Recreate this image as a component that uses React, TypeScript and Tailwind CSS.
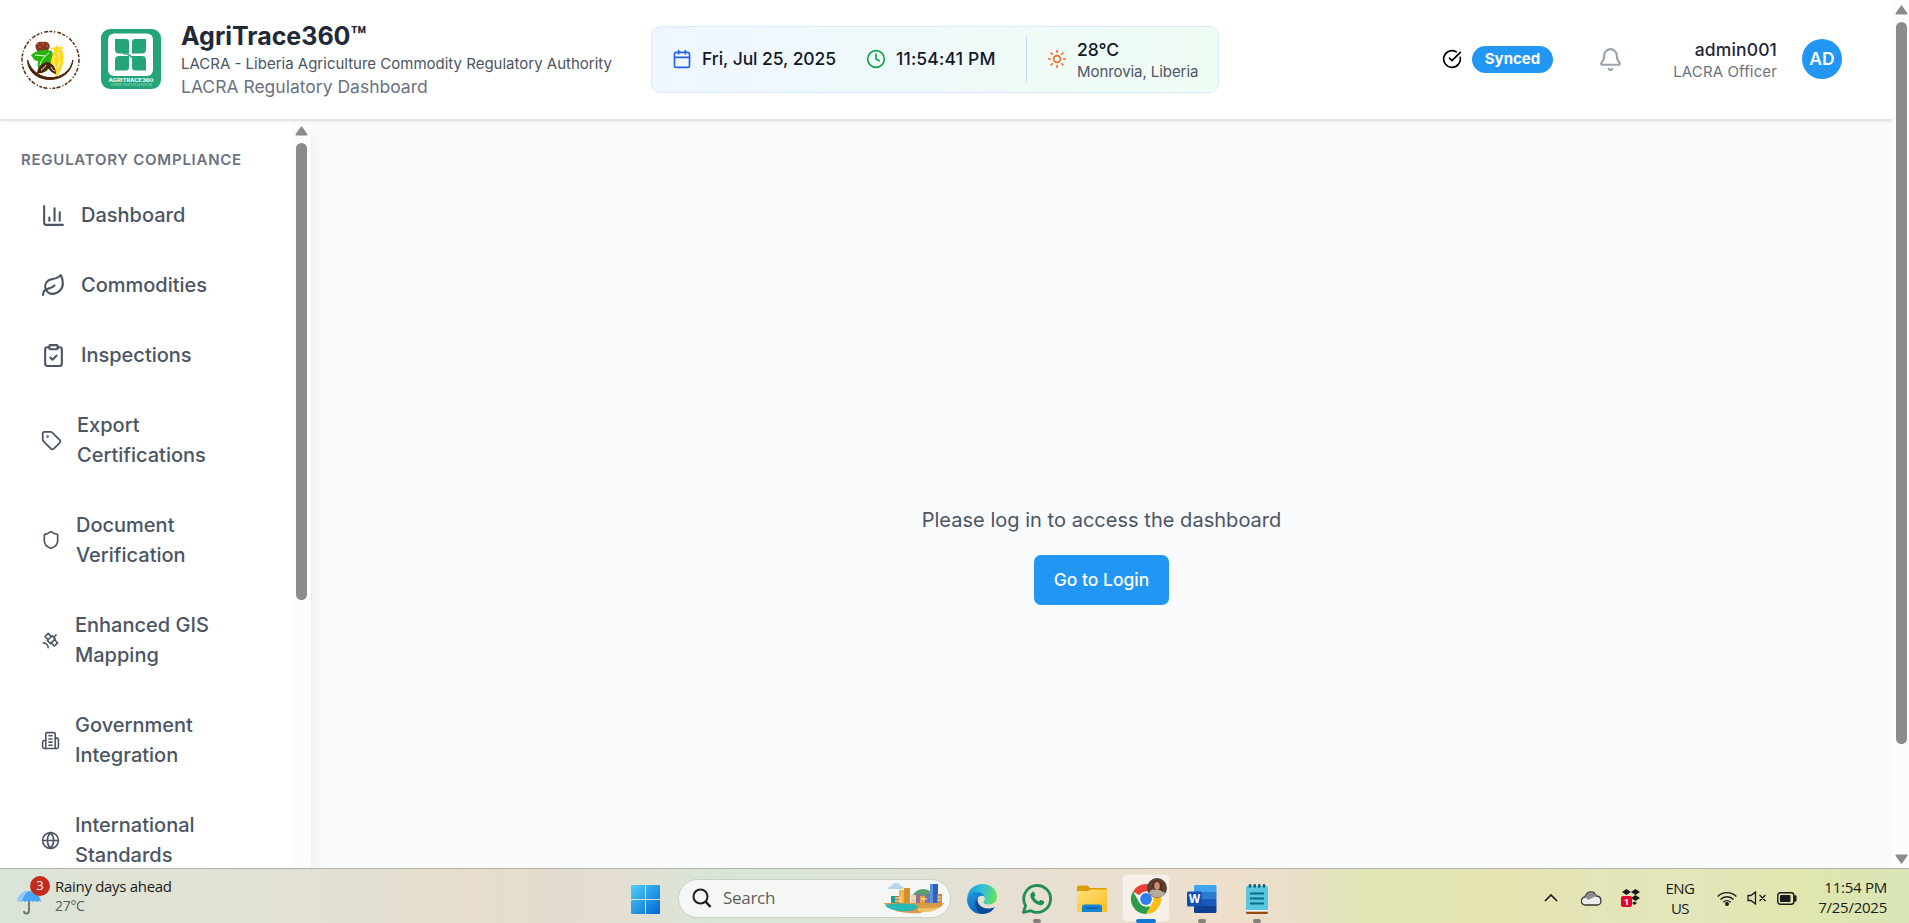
import type { ReactNode } from "react";
import {
  Bell,
  Calendar,
  ChartColumn,
  CircleCheckBig,
  ClipboardCheck,
  Clock,
  Globe,
  Leaf,
  Shield,
  Sun,
  Tag,
} from "lucide-react";

function Satellite({ className }: { className?: string }) {
  return (
    <svg viewBox="0 0 24 24" fill="none" stroke="currentColor" strokeWidth="2" strokeLinecap="round" strokeLinejoin="round" className={className}>
      <path d="M13 7 9 3 5 7l4 4" />
      <path d="m17 11 4 4-4 4-4-4" />
      <path d="m8 12 4 4 6-6-4-4Z" />
      <path d="m16 8 3-3" />
      <path d="M9 21a6 6 0 0 0-6-6" />
    </svg>
  );
}

function Building({ className }: { className?: string }) {
  return (
    <svg viewBox="0 0 24 24" fill="none" stroke="currentColor" strokeWidth="2" strokeLinecap="round" strokeLinejoin="round" className={className}>
      <path d="M6 22V4a2 2 0 0 1 2-2h8a2 2 0 0 1 2 2v18Z" />
      <path d="M6 12H4a2 2 0 0 0-2 2v6a2 2 0 0 0 2 2h2" />
      <path d="M18 9h2a2 2 0 0 1 2 2v9a2 2 0 0 1-2 2h-2" />
      <path d="M10 6h4M10 10h4M10 14h4M10 18h4" />
    </svg>
  );
}

const navItems: { lines: string[]; icon: ReactNode }[] = [
  { lines: ["Dashboard"], icon: <ChartColumn className="size-[25px] shrink-0" /> },
  { lines: ["Commodities"], icon: <Leaf className="size-[25px] shrink-0" /> },
  { lines: ["Inspections"], icon: <ClipboardCheck className="size-[25px] shrink-0" /> },
  { lines: ["Export", "Certifications"], icon: <Tag className="size-[21px] shrink-0" /> },
  { lines: ["Document", "Verification"], icon: <Shield className="size-[20px] shrink-0" /> },
  { lines: ["Enhanced GIS", "Mapping"], icon: <Satellite className="size-[19px] shrink-0" /> },
  { lines: ["Government", "Integration"], icon: <Building className="size-[19px] shrink-0" /> },
  { lines: ["International", "Standards"], icon: <Globe className="size-[19px] shrink-0" /> },
];

function Arrow({ down }: { down?: boolean }) {
  return (
    <svg viewBox="0 0 13 10" className={down ? "h-[10px] w-[13px] rotate-180" : "h-[10px] w-[13px]"}>
      <path d="M6.5 1.2 11.8 8.6H1.2Z" fill="#8b8b8b" stroke="#8b8b8b" strokeWidth="1.6" strokeLinejoin="round" />
    </svg>
  );
}

function LacraLogo() {
  return (
    <svg viewBox="0 0 60 60" className="size-[60px]">
      <circle cx="30.5" cy="31" r="28.500" fill="none" stroke="#5a2f0c" strokeWidth="1.500" strokeDasharray="3 1.6 1.2 2.2 4 1.3" />
      <path d="M7.500 31C8 56 50 58 53 31C48 54 15 55 7.500 31Z" fill="#4b2205" stroke="#4b2205" />
      <path d="M15.500 18c0-5 4-6 7-5 5-1 8 2 7 6l-2 3H17Z" fill="#7c3a20" />
      <path d="M17 15h2m3 0h2m2 2h2m-9 1h2" stroke="#ef4d27" strokeWidth="1.600" />
      <path d="M11 26c5-5 14-6 21-4l1 4c-2 5-2 16-9 17-6-1-7-6-6-11-3 0-4-1-5-3Z" fill="#27b40d" />
      <path d="M20 36c1-5 5-9 9-12M15 26l10 1" stroke="#e9ffe0" strokeWidth="1" fill="none" />
      <path d="M37 16l2 4 3 1c3 6 2 18-5 26-6-3-8-12-5-19l2-7Z" fill="#ffd91c" />
      <path d="M31 20l5-1 7 0" stroke="#ffd91c" strokeWidth="2" fill="none" />
      <path d="M38 23c2 6 2 12-1 17M34 27c-1 6 0 9 2 13" stroke="#fff7c2" strokeWidth="1" fill="none" />
      <path d="M17 44c1-7 6-11 11-11 5 2 8 6 8 12-4-1-6-3-8-6-2 4-6 6-11 5Z" fill="#4b2205" />
      <path d="M21 41c2-1 4-3 5-5m5 2c1 2 2 4 4 4M25 47c2-1 3-3 4-5 1 3 3 4 4 5" stroke="#fff" strokeWidth="1" fill="none" />
    </svg>
  );
}

function AgriLogo() {
  return (
    <svg viewBox="0 0 60 60" className="size-[60px]">
      <rect width="60" height="60" rx="9" fill="#23a577" />
      <rect x="7" y="4.500" width="45" height="42.500" rx="6" fill="#fff" />
      <g fill="#23a577">
        <path d="M14 10h11q3 0 3 3v11.500H18q-4 0-4-4Z" />
        <path d="M45 10H34q-3 0-3 3v11.500h10q4 0 4-4Z" />
        <path d="M14 41.500h11q3 0 3-3V27H18q-4 0-4 4Z" />
        <path d="M45 41.500H34q-3 0-3-3V27h10q4 0 4 4Z" />
        <path d="M22 24.500q6 .3 9 4" stroke="#23a577" strokeWidth="1.500" fill="none" />
      </g>
      <text x="7.500" y="53" textLength="45" lengthAdjust="spacingAndGlyphs" fontFamily="Inter, sans-serif" fontWeight="700" fontSize="4.600" fill="#fff">AGRITRACE360</text>
      <text x="10" y="57" textLength="41" lengthAdjust="spacingAndGlyphs" fontFamily="Inter, sans-serif" fontSize="3.200" fill="#a5dcc8">FARM DIGITALIZATION</text>
    </svg>
  );
}

function Header() {
  return (
    <header className="relative z-10 flex h-[120px] shrink-0 items-center border-b border-[#e2e6ea] bg-white pr-[50px] pb-px pl-5 shadow-sm">
      <LacraLogo />
      <div className="ml-[21px]">
        <AgriLogo />
      </div>
      <div className="ml-5 w-[470px]">
        <h1 className="text-[25px] leading-[31px] font-bold text-[#1f2937]">AgriTrace360™</h1>
        <p className="text-[15px] leading-[23px] text-[#4b5563]">LACRA - Liberia Agriculture Commodity Regulatory Authority</p>
        <p className="text-[17.5px] leading-[23px] text-[#6b7280]">LACRA Regulatory Dashboard</p>
      </div>
      <div className="flex h-[67px] w-[568px] shrink-0 items-center rounded-[10px] border border-blue-100 bg-linear-to-r from-[#eff6ff] to-[#f0fdf4] pl-5 text-[17.5px] font-medium text-[#111827]">
        <Calendar className="size-5 text-[#2563eb]" />
        <span className="ml-2.5 w-[134px] tracking-[-0.08px] whitespace-nowrap">Fri, Jul 25, 2025</span>
        <Clock className="ml-[30px] size-5 text-[#16a34a]" />
        <span className="ml-2.5 w-[100px] tracking-[0.18px] whitespace-nowrap">11:54:41 PM</span>
        <div className="ml-[30px] flex h-[45px] items-center border-l border-[#bfdbfe] pl-5">
          <Sun className="size-5 text-[#f26b1d]" />
          <div className="ml-2.5">
            <div className="leading-[25px]">28°C</div>
            <div className="text-[15px] leading-5 font-normal tracking-[-0.07px] whitespace-nowrap text-[#4b5563]">Monrovia, Liberia</div>
          </div>
        </div>
      </div>
      <div className="ml-auto flex items-center">
        <CircleCheckBig className="size-5 text-black" />
        <span className="ml-2.5 flex h-[27px] w-[81px] items-center justify-center rounded-full bg-[#2196f3] text-[15px] font-bold text-white">Synced</span>
        <Bell className="ml-[45px] size-[25px] text-[#9ca3af]" />
        <div className="ml-[50px] flex w-[104px] flex-col items-end">
          <div className="text-[17.5px] leading-[25px] font-medium tracking-[0.15px] text-[#1f2937]">admin001</div>
          <div className="text-[15px] leading-5 tracking-[0.13px] whitespace-nowrap text-[#6b7280]">LACRA Officer</div>
        </div>
        <div className="ml-[25px] flex size-10 items-center justify-center rounded-full bg-[#2196f3] text-[17.5px] font-semibold text-white">AD</div>
      </div>
    </header>
  );
}

function Sidebar() {
  return (
    <aside className="flex w-[311px] shrink-0 overflow-hidden bg-white shadow-[0_12px_19px_-4px_rgba(0,0,0,0.1),0_5px_8px_-5px_rgba(0,0,0,0.1)]">
      <nav className="w-[292px] pt-[27px] pl-[21px]">
        <h2 className="mb-[8px] text-[15px] leading-[25px] font-semibold tracking-[0.75px] text-[#6b7280]">REGULATORY COMPLIANCE</h2>
        {navItems.map((item) => (
          <div key={item.lines[0]} className="flex items-center gap-[15px] py-5 pl-5 text-[20px] leading-[30px] font-medium text-[#4b5563]">
            {item.icon}
            <span>
              {item.lines.map((line) => (
                <span key={line} className="block whitespace-nowrap">{line}</span>
              ))}
            </span>
          </div>
        ))}
      </nav>
      <div className="flex w-[19px] flex-col items-center bg-[#fcfcfc] pt-[6px]">
        <Arrow />
        <div className="mt-[7px] h-[457px] w-[11px] rounded-full bg-[#8b8b8b]" />
      </div>
    </aside>
  );
}

function WindowsLogo() {
  return (
    <svg viewBox="0 0 29 29" className="size-[29px]">
      <defs>
        <linearGradient id="win" x1="0" y1="0" x2="1" y2="1">
          <stop offset="0" stopColor="#4fd0fb" />
          <stop offset="1" stopColor="#0067d1" />
        </linearGradient>
      </defs>
      <path d="M0 1q0-1 1-1h13v14H0ZM15 0h13q1 0 1 1v13H15ZM0 15h14v14H1q-1 0-1-1ZM15 15h14v13q0 1-1 1H15Z" fill="url(#win)" />
    </svg>
  );
}

function CityArt() {
  return (
    <svg viewBox="0 0 60 32" className="h-8 w-[60px]">
      <path d="M4 7c0-3 4-3 5-5 4-3 7 0 8 2 3 0 3 3 2 3Z" fill="#b9d6e8" />
      <path d="M28 14c4-7 12-9 18-5l4 8H28Z" fill="#5c9f70" />
      <rect x="46" y="2" width="8" height="20" fill="#2f63b8" />
      <path d="M46 2h3v20h-3Z" fill="#5c8fe0" />
      <path d="M10 14h9v9h-9Z" fill="#b8784a" />
      <path d="M15 8h10v15H15Z" fill="#f0b548" />
      <path d="M20 6h6v17h-6Z" fill="#d98e2c" />
      <path d="M7 14h4v7H7Z" fill="#1d9d93" />
      <path d="M27 13h6v9h-6Z" fill="#e8cfa4" />
      <path d="M32 12h5v12h-5Z" fill="#8f6fa0" />
      <path d="M36 14h8v9h-8Z" fill="#e9a44a" />
      <path d="M41 12h5v12h-5Z" fill="#6f77b0" />
      <path d="M53 12h5v10h-5Z" fill="#c9814c" />
      <path d="M11 16h7M11 19h7M28 16h4M37 17h6M54 15h3M54 18h3" stroke="#fff0c8" strokeWidth="1" />
      <path d="M0 21h60l-3 4c-6 2-14 1-20 6-10 1-20-1-26-2 4-3-9-4-11-8Z" fill="#d99a45" />
      <path d="M1 23c9-2 23-2 32 0 2 3-3 6-9 6-8 1-20-1-23-6Z" fill="#27b8b3" />
      <path d="M34 26c6 1 12-1 20 0-3 4-14 5-20 3Z" fill="#f0c06b" />
    </svg>
  );
}

function EdgeIcon() {
  return (
    <svg viewBox="0 0 30 30" className="size-[30px]">
      <defs>
        <linearGradient id="edgeTop" x1="0" y1="0.300" x2="1" y2="0.500">
          <stop offset="0" stopColor="#1f9fe0" />
          <stop offset="0.500" stopColor="#35c1d5" />
          <stop offset="1" stopColor="#62e35b" />
        </linearGradient>
        <linearGradient id="edgeLow" x1="0" y1="0" x2="0.600" y2="1">
          <stop offset="0" stopColor="#1b9de2" />
          <stop offset="1" stopColor="#0f5fb8" />
        </linearGradient>
      </defs>
      <path d="M0.300 13C1.500 5 8 0 15.500 0 24 0 30 6 30 12.500c0 5-4 8-8.300 8-3.200 0-5.200-1-5.200-2.100 0-.9 1.300-1.500 1.300-3.800 0-3-3.600-5.800-8-5.800-5 0-8.500 2-9.500 4.200Z" fill="url(#edgeTop)" />
      <path d="M0.300 13C1.500 10 5 8 9.500 8c4 0 7 2 8 4.500-1.500-1-4.500-1-6.500 1-4 4-2.500 12.500 4.500 16.500C7 30.500 0 24 0 15.500Z" fill="url(#edgeLow)" />
      <path d="M11 13.500C9 19 14 25 22 24.500c3 0 4.500-1 6-1.500C25 28 20 30 15.500 30 8 28 6 18 11 13.500Z" fill="#0c4a94" />
    </svg>
  );
}

function WhatsAppIcon() {
  return (
    <svg viewBox="0 0 30 30" className="size-[30px]">
      <path d="M1.500 28.500 3.500 21.500A13.400 13.400 0 1 1 8.800 26.700Z" fill="none" stroke="#1f8f55" strokeWidth="2.800" strokeLinejoin="round" />
      <path d="M10.200 8c.7-.6 1.700-.5 2 .2l1.100 2.600c.2.500-.1 1.100-1.200 2.200 1 2 2.600 3.600 4.900 4.600 1.200-1.500 1.700-1.800 2.300-1.500l2.500 1.200c.8.500.5 2-.5 3-1.100 1-2.500 1.200-4.200.7-4.500-1.400-7-4-8.400-7.400-.8-2-.3-4.100 1.500-5.600Z" fill="#1f8f55" />
    </svg>
  );
}

function FolderIcon() {
  return (
    <svg viewBox="0 0 30 28" className="h-[28px] w-[30px]">
      <defs>
        <linearGradient id="fold" x1="0" y1="0" x2="1" y2="1">
          <stop offset="0" stopColor="#ffe07a" />
          <stop offset="1" stopColor="#f9bd20" />
        </linearGradient>
      </defs>
      <path d="M0 2q0-1.500 1.500-1.500H9q1.500 0 2.500 1L13 3h15q2 0 2 2v6H0Z" fill="#dc9c08" />
      <path d="M0 7q0-1 1-1h10l2.500-1.500H29q1 0 1 1v20q0 1.500-1.500 1.500h-27Q0 27 0 25.500Z" fill="url(#fold)" />
      <path d="M5 27v-5q0-2.500 2.500-2.500h15Q25 19.500 25 22v5Z" fill="#1583d4" />
      <path d="M9 23h12" stroke="#0a5798" strokeWidth="1.200" />
    </svg>
  );
}

function ChromeIcon() {
  return (
    <svg viewBox="0 0 36 36" className="size-[36px]">
      <path d="M15 21 2 13.500A15 15 0 0 1 28 13.500H15Z" fill="#ea4335" />
      <path d="M15 13.500h13A15 15 0 0 1 15 36l6.500-11.500Z" fill="#fbbc16" />
      <path d="M2 13.500 8.500 24.800 15 28.500h4.300L15 36A15 15 0 0 1 2 13.500Z" fill="#2c9b4b" />
      <circle cx="15" cy="21" r="7.500" fill="#fff" />
      <circle cx="15" cy="21" r="5.900" fill="#2f7de9" />
      <circle cx="26" cy="10" r="10" fill="#554339" />
      <path d="M18 15c1-3 4-4 6-4l5 1c3 1 5 2 5 4a10 10 0 0 1-16-1Z" fill="#b5ad9c" />
      <path d="M21 9c-1-9 10-9 10 0l1 5-3-2h-6Z" fill="#5b2a1c" />
      <ellipse cx="26" cy="8" rx="2.800" ry="4" fill="#c98e6e" />
    </svg>
  );
}

function WordIcon() {
  return (
    <svg viewBox="0 0 30 28" className="h-[28px] w-[30px]">
      <path d="M7 1.500Q7 0 8.500 0H28q1.500 0 1.500 1.500V7H7Z" fill="#41a5ee" />
      <path d="M7 7h22.500v7H7Z" fill="#2b7cd3" />
      <path d="M7 14h22.500v7H7Z" fill="#185abd" />
      <path d="M7 21h22.500v5.500Q29.500 28 28 28H8.500Q7 28 7 26.500Z" fill="#103f91" />
      <rect x="0" y="6.500" width="15" height="15" rx="1.500" fill="#174fb0" />
      <text x="7.500" y="18" textAnchor="middle" fontFamily="Open Sans, sans-serif" fontSize="11.500" fontWeight="700" fill="#fff">W</text>
    </svg>
  );
}

function NotepadIcon() {
  return (
    <svg viewBox="0 0 22 30" className="h-[30px] w-[22px]">
      <path d="M0 24h22v4.500q0 1.500-1.500 1.500h-19Q0 30 0 28.500Z" fill="#9a4a12" />
      <path d="M0 25.500h22v2.200H0Z" fill="#f2f2f2" />
      <path d="M0 3.500Q0 2 1.500 2h19Q22 2 22 3.500V26H0Z" fill="#58c6df" />
      <path d="M4 9.500h14M4 14.500h14M4 19.500h14" stroke="#0b6b88" strokeWidth="1.800" />
      <path d="M4 1.300v1.200M8.700 1.300v1.200M13.300 1.300v1.200M18 1.300v1.200" stroke="#0b5f7c" strokeWidth="2.600" strokeLinecap="round" />
    </svg>
  );
}

function TaskApp({ children, dot, active }: { children: ReactNode; dot?: boolean; active?: boolean }) {
  return (
    <div className="relative flex h-[54px] w-[55px] items-center justify-center pt-[6px]">
      {active && <div className="absolute top-[5px] left-[3px] h-[48px] w-[48px] rounded-[5px] border border-[#ebe4da] bg-[#f6f0e8]" />}
      <div className="relative flex">{children}</div>
      {dot && <div className="absolute bottom-0 left-[24px] h-1 w-2 rounded-full bg-[#85807a]" />}
      {active && <div className="absolute bottom-0 left-[17px] h-1 w-5 rounded-full bg-[#0f78d4]" />}
    </div>
  );
}

function Taskbar() {
  return (
    <footer className="flex h-[55px] shrink-0 items-center border-t border-[#b2b3a8] bg-[linear-gradient(90deg,#dae4d9_0%,#e0e3d4_7%,#e2e0d3_18%,#e6ddcb_25%,#e3ddd0_30%,#e4dfd1_32%,#d9e4d8_37%,#dde4d8_46%,#e6e0d2_52%,#e9dfd0_58%,#eedfcb_65%,#e8dfc9_68%,#e0e5b5_71%,#e5e3b2_79%,#e3e5b9_85%,#e3e5ba_89%,#e0e6ad_94%,#dae6b8_100%)] font-['Open_Sans',sans-serif] text-[#1b1b1b]">
      <div className="flex w-[631px] items-center pl-[17px]">
        <div className="relative flex h-[40px] w-[38px] items-end pb-px">
          <svg viewBox="0 0 24 25" className="h-[25px] w-[24px]">
            <path d="M12 9v11q0 3.500-2.500 3.500Q7 23.500 7 21" fill="none" stroke="#777" strokeWidth="2" />
            <path d="M0 12C1 4 7 1 12 1s11 3 12 11q-2-2-4 0-2-2-4 0-2-2-4 0-2-2-4 0-2-2-4 0-2-2-4 0Z" fill="#4aa5f5" />
            <path d="M0 12C1 4 7 1 12 1 7 4 6 8 5 12q-3-2-5 0Z" fill="#93cbf8" />
          </svg>
          <div className="absolute top-0 left-[13px] flex size-5 items-center justify-center rounded-full bg-[#c42b1c] text-[13px] text-white">3</div>
        </div>
        <div className="whitespace-nowrap">
          <div className="text-[15px] leading-5 tracking-[-0.3px]">Rainy days ahead</div>
          <div className="text-[14px] leading-5 tracking-[-0.3px] text-[#5c5c58]">27°C</div>
        </div>
      </div>
      <div className="pt-[6px]">
        <WindowsLogo />
      </div>
      <div className="mt-[4px] ml-[18px] flex h-[39px] w-[273px] items-center rounded-full border border-[#cdd0c8] bg-[#f5f7f4] pl-[13px]">
        <svg viewBox="0 0 20 20" className="size-5" fill="none" stroke="#1f1f1f">
          <circle cx="8.500" cy="8.500" r="7" strokeWidth="2" />
          <path d="m13.500 13.500 5 5.500" strokeWidth="2.600" />
        </svg>
        <span className="ml-[11px] text-[17px] tracking-[-0.3px] text-[#5d5d5d]">Search</span>
        <div className="mr-[6px] ml-auto">
          <CityArt />
        </div>
      </div>
      <div className="ml-[3px] flex">
        <TaskApp><EdgeIcon /></TaskApp>
        <TaskApp dot><WhatsAppIcon /></TaskApp>
        <TaskApp><FolderIcon /></TaskApp>
        <TaskApp active><div className="mb-[6px] ml-1"><ChromeIcon /></div></TaskApp>
        <TaskApp dot><WordIcon /></TaskApp>
        <TaskApp dot><NotepadIcon /></TaskApp>
      </div>
      <div className="ml-auto flex items-center pt-[4px] pr-[22px]">
        <svg viewBox="0 0 14 8" className="h-2 w-[14px]"><path d="m1 7 6-6 6 6" fill="none" stroke="#1b1b1b" strokeWidth="1.700" /></svg>
        <svg viewBox="0 0 21 15" className="ml-[23px] h-[15px] w-[21px]">
          <path d="M4.500 14a4 4 0 0 1-.5-8C6 0 13-1 15 5c4 0 5 3 5 5s-1.500 4-4 4Z" fill="#ececec" stroke="#333" strokeWidth="1.300" />
          <path d="M4.500 6C6 0 13 0 15 5l-4 2-4 2Z" fill="#8b8b8b" />
        </svg>
        <div className="relative ml-[19px] h-[18px] w-[20px]">
          <svg viewBox="0 0 20 18" className="h-[18px] w-5">
            <path d="m1 3 4.500-3L10 3 5.500 6Zm9 0 4.500-3L19 3l-4.500 3ZM10 9l4.500-3L19 9l-4.500 3Zm1 5 2.500-1.500 2.500 1.500-2.500 2Z" fill="#1b1b1b" />
          </svg>
          <div className="absolute top-[7px] left-0 flex h-[11px] w-[11px] items-center justify-center rounded-[2px] bg-[#e0062d] text-[9px] leading-none font-bold text-white">1</div>
        </div>
        <div className="ml-[23px] w-[32px] text-center text-[15px] leading-5 tracking-[-0.5px]">
          <div>ENG</div>
          <div>US</div>
        </div>
        <svg viewBox="0 0 20 15" className="ml-[21px] h-[15px] w-5" fill="none" stroke="#1b1b1b" strokeWidth="1.400">
          <path d="M.7 5.500a13 13 0 0 1 18.600 0M3.500 8.500a9 9 0 0 1 13 0M6.300 11.200a5.200 5.200 0 0 1 7.400 0" />
          <circle cx="10" cy="13" r="1.300" fill="#1b1b1b" />
        </svg>
        <svg viewBox="0 0 20 14" className="ml-[10px] h-[14px] w-5" fill="none" stroke="#1b1b1b" strokeWidth="1.300">
          <path d="M1 4.500h3L8.500 1v12L4 9.500H1ZM12.500 4l6 6m0-6-6 6" />
        </svg>
        <svg viewBox="0 0 20 13" className="ml-[10px] h-[13px] w-5">
          <rect x=".8" y=".8" width="16" height="11.400" rx="2.500" fill="none" stroke="#1b1b1b" strokeWidth="1.400" />
          <rect x="3" y="3" width="10.500" height="7" rx=".8" fill="#1b1b1b" />
          <path d="M18.300 4.500v4" stroke="#1b1b1b" strokeWidth="2.500" strokeLinecap="round" />
        </svg>
        <div className="mb-[2px] ml-[15px] flex w-[75px] flex-col items-end text-[15px] leading-5 tracking-[-0.25px] whitespace-nowrap">
          <div>11:54 PM</div>
          <div>7/25/2025</div>
        </div>
      </div>
    </footer>
  );
}

export default function App() {
  return (
    <div className="flex h-[923px] w-[1909px] flex-col overflow-hidden bg-white font-[Inter,sans-serif]">
      <div className="flex h-[868px] shrink-0">
        <div className="flex min-w-0 flex-1 flex-col overflow-hidden">
          <Header />
          <div className="flex min-h-0 flex-1 bg-[#f8fafc]">
            <Sidebar />
            <main className="flex flex-1 flex-col items-center pt-[385px]">
              <p className="text-[20px] leading-[30px] tracking-[0.03px] text-[#4b5563]">Please log in to access the dashboard</p>
              <button className="mt-5 h-[50px] w-[135px] rounded-[7px] bg-[#2196f3] text-[17.5px] font-medium text-white">Go to Login</button>
            </main>
          </div>
        </div>
        <div className="flex w-[17px] flex-col items-center bg-[#fcfcfc] pt-[5px] pb-[4px] pl-[2px]">
          <Arrow />
          <div className="mt-[7px] mb-auto h-[722px] w-[11px] rounded-full bg-[#8b8b8b]" />
          <Arrow down />
        </div>
      </div>
      <Taskbar />
    </div>
  );
}
